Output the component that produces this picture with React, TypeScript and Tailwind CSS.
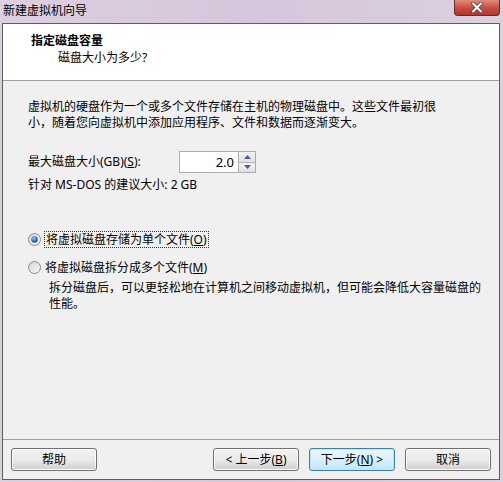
import React from 'react';

const font = { fontFamily: '"Noto Sans", "Noto Sans CJK SC", sans-serif' };

const Radio = ({ checked }: { checked?: boolean }) => (
  <svg width="13" height="13" viewBox="0 0 13 13" className="shrink-0">
    <defs>
      <linearGradient id="rb" x1="0" y1="0" x2="1" y2="1">
        <stop offset="0" stopColor="#d4d4d4" />
        <stop offset="1" stopColor="#fafafa" />
      </linearGradient>
      <radialGradient id="rd" cx="0.4" cy="0.35" r="0.7">
        <stop offset="0" stopColor="#9fd8ff" />
        <stop offset="0.5" stopColor="#2a82c8" />
        <stop offset="1" stopColor="#0d4d84" />
      </radialGradient>
    </defs>
    <circle cx="6.5" cy="6.5" r="6" fill="url(#rb)" stroke="#8a8a8a" strokeWidth="1" />
    {checked && <circle cx="6.5" cy="6.5" r="3.2" fill="url(#rd)" />}
  </svg>
);

const Btn = ({ children, focus }: { children: React.ReactNode; focus?: boolean }) => (
  <button
    className={
      'w-[86px] h-[23px] rounded-[3px] border text-[12px] text-black flex items-center justify-center ' +
      (focus
        ? 'border-[#3c7fb1] bg-gradient-to-b from-[#eaf6fd] via-[#d9f0fc] to-[#bee6fd] shadow-[inset_0_0_0_1px_#bfe6ff]'
        : 'border-[#707070] bg-gradient-to-b from-[#f2f2f2] via-[#ebebeb] to-[#cfcfcf] shadow-[inset_0_0_0_1px_#fcfcfc]')
    }
    style={font}
  >
    {children}
  </button>
);

export default function App() {
  return (
    <div
      className="w-[503px] h-[482px] flex flex-col bg-gradient-to-r from-[#dccfe0] via-[#d6c6db] to-[#dbcfe0] pl-[2px] pr-[3px] pb-[2px] overflow-hidden"
      style={font}
    >
      {/* Title bar */}
      <div className="h-[23px] flex items-start justify-between shrink-0">
        <div className="pt-[4px] pl-[1px] text-[12px] leading-[14px] text-black">新建虚拟机向导</div>
        <div className="w-[46px] h-[16px] rounded-b-[4px] border border-t-0 border-[#6b2a24] bg-gradient-to-b from-[#e08a7c] via-[#c9503f] to-[#b0352a] flex items-center justify-center">
          <svg width="14" height="11" viewBox="0 0 14 11">
            <path d="M3 1.5 L11 9.5 M11 1.5 L3 9.5" stroke="#4a4a4a" strokeWidth="3.6" strokeLinecap="round" />
            <path d="M3 1.5 L11 9.5 M11 1.5 L3 9.5" stroke="#ffffff" strokeWidth="2" strokeLinecap="round" />
          </svg>
        </div>
      </div>

      {/* Content */}
      <div className="flex-1 flex flex-col border border-[#5e5e5e] bg-[#f0f0f0]">
        <div className="h-[57px] bg-white border-b border-[#a0a0a0] pl-[28px] pt-[9px] shrink-0">
          <div className="text-[12px] font-bold leading-[16px] text-black">指定磁盘容量</div>
          <div className="pl-[27px] text-[12px] leading-[16px] text-black mt-[1px]">磁盘大小为多少?</div>
        </div>

        <div className="flex-1 pl-[25px] pr-[10px] pt-[18px] text-[12px] text-black">
          <div className="leading-[16px]">虚拟机的硬盘作为一个或多个文件存储在主机的物理磁盘中。这些文件最初很</div>
          <div className="leading-[16px]">小，随着您向虚拟机中添加应用程序、文件和数据而逐渐变大。</div>

          <div className="mt-[20px] flex items-center h-[22px]">
            <span className="w-[151px]">
              最大磁盘大小(GB)(<span className="underline">S</span>):
            </span>
            <div className="flex h-[22px] w-[77px] border border-[#abadb3] bg-white">
              <div className="flex-1 text-right pr-[4px] leading-[20px] text-[13px]">2.0</div>
              <div className="w-[17px] flex flex-col border-l border-[#abadb3]">
                <div className="flex-1 flex items-center justify-center bg-gradient-to-b from-[#f4f4f4] to-[#e0e0e0] border-b border-[#b5b5b5]">
                  <svg width="7" height="4" viewBox="0 0 7 4"><path d="M0 4 L3.5 0 L7 4 Z" fill="#4a5f9a" /></svg>
                </div>
                <div className="flex-1 flex items-center justify-center bg-gradient-to-b from-[#f4f4f4] to-[#e0e0e0]">
                  <svg width="7" height="4" viewBox="0 0 7 4"><path d="M0 0 L3.5 4 L7 0 Z" fill="#4a5f9a" /></svg>
                </div>
              </div>
            </div>
          </div>

          <div className="mt-[4px] leading-[16px]">针对 MS-DOS 的建议大小: 2 GB</div>

          <div className="mt-[38px] flex items-center gap-[3px] h-[17px]">
            <Radio checked />
            <span className="border border-dotted border-[#333] px-[1px] leading-[15px]">
              将虚拟磁盘存储为单个文件(<span className="underline">O</span>)
            </span>
          </div>

          <div className="mt-[11px] flex items-center gap-[4px] h-[17px]">
            <Radio />
            <span className="leading-[15px]">
              将虚拟磁盘拆分成多个文件(<span className="underline">M</span>)
            </span>
          </div>

          <div className="mt-[4px] pl-[21px]">
            <div className="leading-[16px]">拆分磁盘后，可以更轻松地在计算机之间移动虚拟机，但可能会降低大容量磁盘的</div>
            <div className="leading-[16px]">性能。</div>
          </div>
        </div>

        <div className="h-[40px] shrink-0 border-t border-[#a0a0a0] flex items-center px-[8px]">
          <Btn>帮助</Btn>
          <div className="flex-1" />
          <Btn>
            &lt; 上一步(<span className="underline">B</span>)
          </Btn>
          <div className="w-[10px]" />
          <Btn focus>
            下一步(<span className="underline">N</span>) &gt;
          </Btn>
          <div className="w-[10px]" />
          <Btn>取消</Btn>
        </div>
      </div>
    </div>
  );
}
